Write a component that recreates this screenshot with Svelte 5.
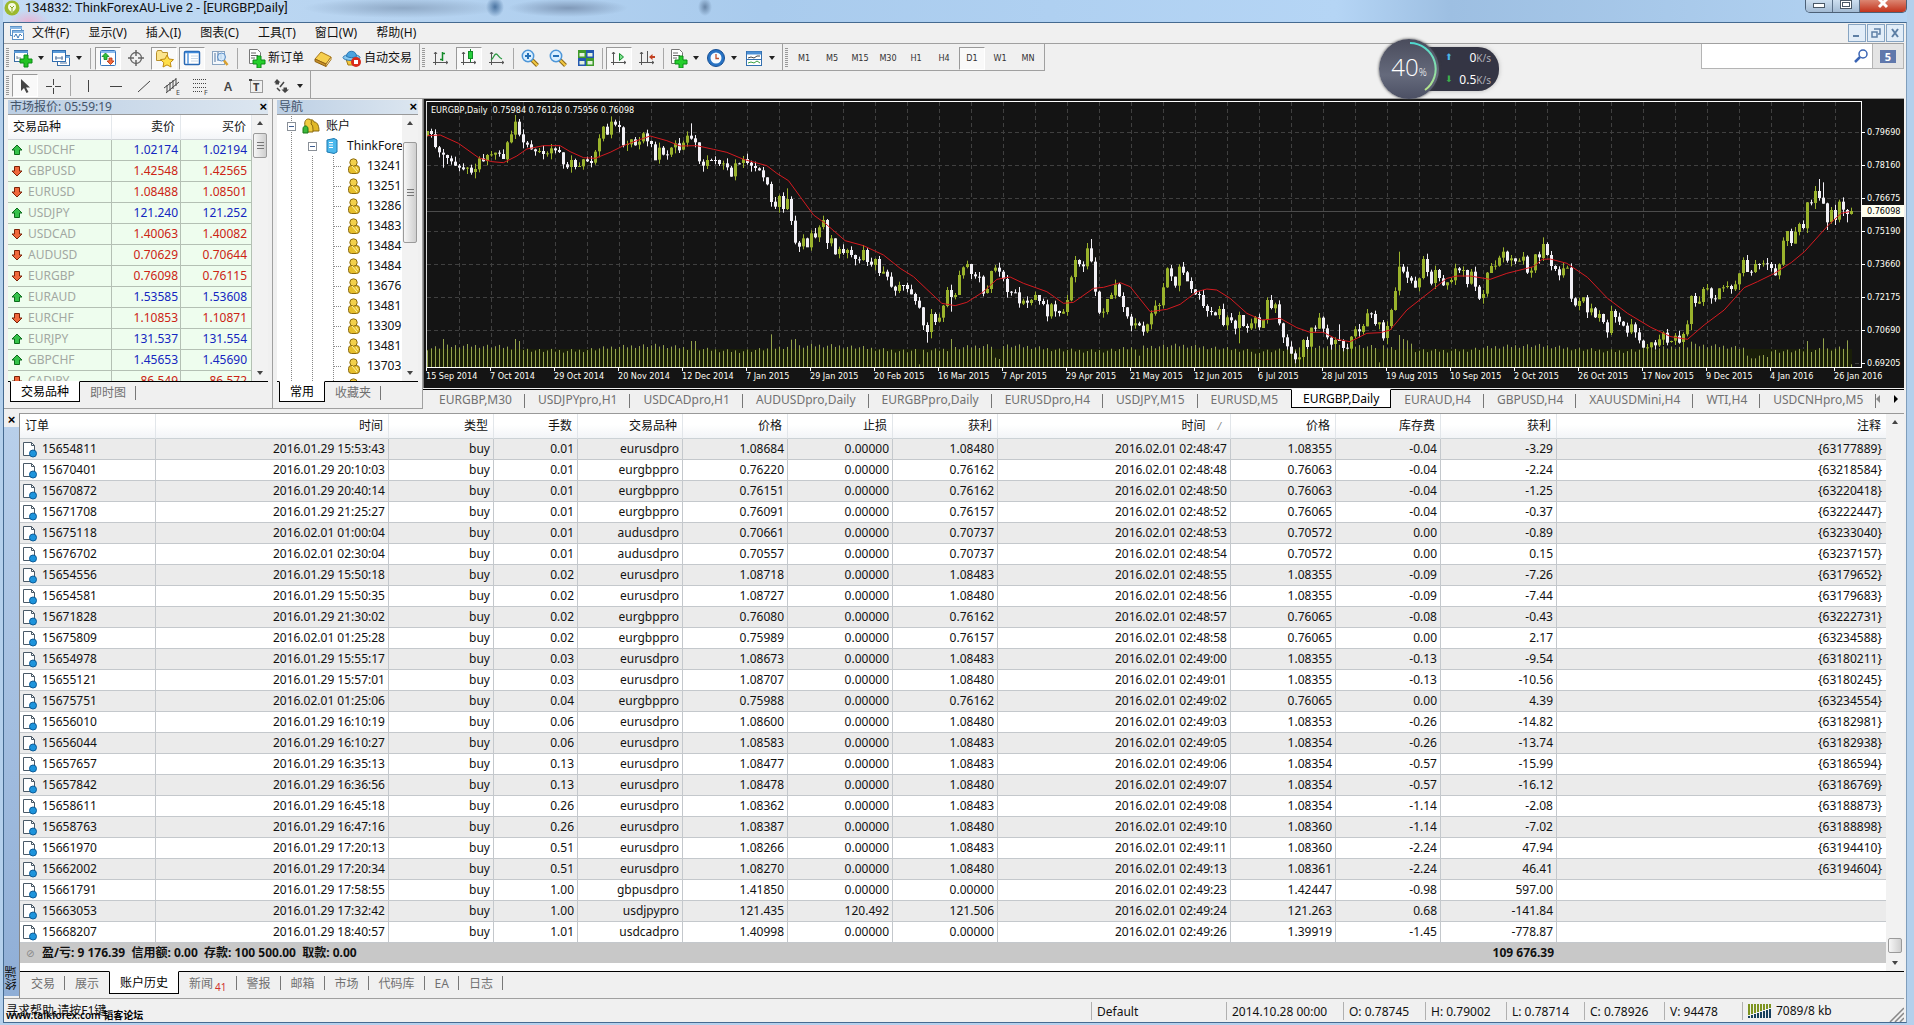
<script lang="ts">
	interface Tool {
		icon?: string;
		label?: string;
		pressed?: boolean;
		caret?: boolean;
		sep?: boolean;
	}

	const menus = ['文件(F)', '显示(V)', '插入(I)', '图表(C)', '工具(T)', '窗口(W)', '帮助(H)'];

	const standardTools: Tool[] = [
		{ icon: 'newchart', caret: true },
		{ icon: 'profiles', caret: true },
		{ sep: true },
		{ icon: 'market', pressed: true },
		{ icon: 'target' },
		{ icon: 'favorites', pressed: true },
		{ icon: 'terminal', pressed: true },
		{ icon: 'tester' },
		{ sep: true },
		{ icon: 'neworder', label: '新订单' },
		{ icon: 'editor' },
		{ icon: 'expert', label: '自动交易' }
	];
	const chartTools: Tool[] = [
		{ icon: 'bars' },
		{ icon: 'candles', pressed: true },
		{ icon: 'linechart' },
		{ sep: true },
		{ icon: 'zoomin' },
		{ icon: 'zoomout' },
		{ icon: 'tile' },
		{ sep: true },
		{ icon: 'autoscroll', pressed: true },
		{ icon: 'shift' },
		{ sep: true },
		{ icon: 'indicators', caret: true },
		{ icon: 'clock', caret: true },
		{ icon: 'template', caret: true }
	];
	const lineTools: Tool[] = [
		{ icon: 'cursor', pressed: true },
		{ icon: 'cross' },
		{ sep: true },
		{ icon: 'vline' },
		{ icon: 'hline' },
		{ icon: 'trend' },
		{ icon: 'channel' },
		{ icon: 'fibo' },
		{ icon: 'text' },
		{ icon: 'label' },
		{ icon: 'arrows', caret: true }
	];
	const periods = ['M1', 'M5', 'M15', 'M30', 'H1', 'H4', 'D1', 'W1', 'MN'];

	const quotes = [
		['USDCHF', '1.02174', '1.02194', 'up'],
		['GBPUSD', '1.42548', '1.42565', 'down'],
		['EURUSD', '1.08488', '1.08501', 'down'],
		['USDJPY', '121.240', '121.252', 'up'],
		['USDCAD', '1.40063', '1.40082', 'down'],
		['AUDUSD', '0.70629', '0.70644', 'down'],
		['EURGBP', '0.76098', '0.76115', 'down'],
		['EURAUD', '1.53585', '1.53608', 'up'],
		['EURCHF', '1.10853', '1.10871', 'down'],
		['EURJPY', '131.537', '131.554', 'up'],
		['GBPCHF', '1.45653', '1.45690', 'up'],
		['CADJPY', '86.549', '86.572', 'down']
	];
	const accounts = ['13241', '13251', '13286', '13483', '13484', '13484', '13676', '13481', '13309', '13481', '13703', '13481'];

	const chartTabs = [
		'EURGBP,M30', 'USDJPYpro,H1', 'USDCADpro,H1', 'AUDUSDpro,Daily', 'EURGBPpro,Daily', 'EURUSDpro,H4',
		'USDJPY,M15', 'EURUSD,M5', 'EURGBP,Daily', 'EURAUD,H4', 'GBPUSD,H4', 'XAUUSDMini,H4', 'WTI,H4', 'USDCNHpro,M5'
	];
	const dates = [
		'15 Sep 2014', '7 Oct 2014', '29 Oct 2014', '20 Nov 2014', '12 Dec 2014', '7 Jan 2015', '29 Jan 2015',
		'20 Feb 2015', '16 Mar 2015', '7 Apr 2015', '29 Apr 2015', '21 May 2015', '12 Jun 2015', '6 Jul 2015',
		'28 Jul 2015', '19 Aug 2015', '10 Sep 2015', '2 Oct 2015', '26 Oct 2015', '17 Nov 2015', '9 Dec 2015',
		'4 Jan 2016', '26 Jan 2016'
	];
	const prices = ['0.79690', '0.78160', '0.76675', '0.75190', '0.73660', '0.72175', '0.70690', '0.69205'];

	// Closing levels, three units to the pixel, measured downwards.
	const closes = [
		108, 117, 157, 173, 180, 190, 200, 212, 217, 222, 218, 232, 222, 190, 198, 180, 178, 173, 177, 192,
		142, 118, 80, 118, 143, 148, 163, 170, 168, 178, 175, 160, 165, 172, 208, 217, 195, 215, 213, 193,
		198, 203, 170, 130, 95, 118, 80, 90, 97, 150, 147, 133, 150, 140, 115, 138, 148, 195, 158, 178,
		180, 158, 145, 165, 143, 122, 130, 142, 200, 212, 195, 195, 195, 208, 205, 218, 245, 205, 205, 192,
		203, 213, 220, 226, 247, 267, 320, 335, 303, 343, 312, 377, 443, 455, 430, 456, 415, 427, 397, 375,
		445, 430, 478, 462, 475, 465, 480, 493, 495, 465, 500, 510, 492, 535, 530, 545, 575, 588, 570, 570,
		583, 597, 617, 637, 690, 712, 657, 680, 668, 632, 585, 605, 600, 540, 517, 507, 538, 545, 545, 595,
		582, 528, 518, 530, 552, 590, 592, 592, 625, 617, 623, 615, 600, 618, 628, 665, 628, 648, 655, 650,
		615, 547, 495, 508, 513, 460, 500, 590, 652, 650, 612, 600, 568, 603, 637, 665, 692, 685, 692, 710,
		688, 655, 632, 630, 577, 520, 545, 573, 515, 532, 558, 583, 597, 600, 633, 648, 652, 660, 642, 690,
		667, 677, 700, 660, 693, 700, 685, 667, 698, 675, 615, 640, 628, 685, 727, 755, 775, 793, 787, 735,
		755, 698, 700, 668, 700, 728, 748, 735, 738, 758, 760, 725, 703, 710, 693, 655, 657, 688, 682, 730,
		693, 645, 588, 515, 530, 548, 557, 578, 550, 492, 530, 565, 525, 550, 572, 562, 555, 520, 527, 525,
		567, 530, 575, 610, 597, 533, 513, 512, 488, 470, 497, 490, 498, 497, 485, 533, 527, 478, 488, 447,
		480, 513, 523, 540, 520, 518, 610, 632, 618, 607, 652, 640, 668, 657, 682, 713, 648, 665, 680, 692,
		712, 688, 712, 737, 758, 757, 742, 750, 733, 713, 742, 738, 722, 742, 717, 688, 603, 625, 620, 582,
		580, 610, 612, 580, 577, 573, 582, 568, 535, 495, 530, 530, 507, 508, 505, 507, 520, 540, 508, 437,
		408, 445, 410, 387, 400, 322, 325, 288, 308, 325, 382, 345, 375, 320, 345, 357, 348
	];
	const highs: Record<number, number> = { 22: 60, 23: 72, 66: 85, 90: 280, 166: 432, 228: 688, 243: 470, 279: 427, 348: 252, 349: 262 };
	const lows: Record<number, number> = { 4: 218, 125: 743, 131: 650, 203: 745, 350: 405, 355: 382 };
	const volumes: Record<number, number> = {
		4: 84, 22: 84, 23: 78, 66: 78, 67: 78, 86: 98, 91: 82, 92: 84, 123: 8, 131: 84, 142: 28, 143: 24, 178: 34,
		207: 40, 238: 14, 243: 96, 244: 84, 245: 80, 246: 70, 316: 76, 330: 34, 331: 26, 332: 26, 333: 34, 334: 36,
		335: 30, 345: 78, 349: 86, 355: 80, 356: 8
	};

	const candles = closes.map((close, i) => {
		const open = i ? closes[i - 1] : 124;
		const top = Math.min(open, close);
		const bottom = Math.max(open, close);
		return {
			x: i * 4,
			up: close < open,
			top: top / 3 - 7,
			height: Math.max(1, Math.round((bottom - top) / 3)),
			high: (highs[i] ?? top - ((i * 7) % 17)) / 3 - 7,
			low: (lows[i] ?? bottom + ((i * 11) % 19)) / 3 - 7,
			volume: (volumes[i] ?? 50 + ((i * 5) % 13) + 8 * Math.sin(i / 7)) / 3
		};
	});

	const average = [
		22, 122, 60, 120, 115, 145, 175, 188, 215, 200, 250, 203, 290, 183, 320, 162, 370, 152, 420, 152, 450, 170,
		490, 188, 525, 190, 570, 172, 610, 152, 650, 137, 690, 123, 740, 137, 780, 153, 830, 152, 880, 163, 920, 172,
		970, 193, 1040, 212, 1070, 235, 1105, 257, 1140, 305, 1180, 360, 1215, 385, 1275, 437, 1330, 452, 1390, 480,
		1440, 520, 1480, 545, 1520, 583, 1565, 625, 1605, 632, 1640, 622, 1690, 590, 1730, 553, 1770, 546, 1810, 565,
		1880, 590, 1930, 625, 1960, 622, 2020, 580, 2050, 577, 2100, 563, 2130, 575, 2190, 650, 2240, 643, 2280, 628,
		2330, 590, 2360, 582, 2390, 585, 2430, 610, 2480, 655, 2525, 675, 2580, 670, 2630, 698, 2670, 712, 2710, 712,
		2750, 733, 2790, 740, 2840, 715, 2880, 713, 2910, 705, 2960, 645, 3030, 590, 3080, 550, 3110, 543, 3150, 543,
		3210, 553, 3260, 535, 3340, 515, 3366, 493, 3390, 492, 3440, 505, 3502, 547, 3562, 610, 3622, 655, 3692, 697,
		3752, 725, 3802, 733, 3852, 690, 3912, 645, 3972, 578, 4012, 560, 4063, 535, 4113, 503, 4153, 470, 4223, 392,
		4263, 355, 4288, 350
	];
	let averagePoints = '';
	for (let i = 0; i < average.length; i += 2) {
		averagePoints += `${(average[i] - 22) / 3 + 0.5},${average[i + 1] / 3 - 7} `;
	}

	const historyColumns = [
		['订单', 136], ['时间', 233], ['类型', 105], ['手数', 84], ['交易品种', 105], ['价格', 105], ['止损', 105],
		['获利', 105], ['时间', 233], ['价格', 105], ['库存费', 105], ['获利', 116], ['注释', 0]
	] as [string, number][];

	// order, open time, lots, symbol, price, S/L, T/P, close time, price, swap, profit, comment
	const history = `
15654811|01.29 15:53:43|0.01|eurusdpro|1.08684|0.00000|1.08480|48:47|1.08355|-0.04|-3.29|{63177889}
15670401|01.29 20:10:03|0.01|eurgbppro|0.76220|0.00000|0.76162|48:48|0.76063|-0.04|-2.24|{63218584}
15670872|01.29 20:40:14|0.01|eurgbppro|0.76151|0.00000|0.76162|48:50|0.76063|-0.04|-1.25|{63220418}
15671708|01.29 21:25:27|0.01|eurgbppro|0.76091|0.00000|0.76157|48:52|0.76065|-0.04|-0.37|{63222447}
15675118|02.01 01:00:04|0.01|audusdpro|0.70661|0.00000|0.70737|48:53|0.70572|0.00|-0.89|{63233040}
15676702|02.01 02:30:04|0.01|audusdpro|0.70557|0.00000|0.70737|48:54|0.70572|0.00|0.15|{63237157}
15654556|01.29 15:50:18|0.02|eurusdpro|1.08718|0.00000|1.08483|48:55|1.08355|-0.09|-7.26|{63179652}
15654581|01.29 15:50:35|0.02|eurusdpro|1.08727|0.00000|1.08480|48:56|1.08355|-0.09|-7.44|{63179683}
15671828|01.29 21:30:02|0.02|eurgbppro|0.76080|0.00000|0.76162|48:57|0.76065|-0.08|-0.43|{63222731}
15675809|02.01 01:25:28|0.02|eurgbppro|0.75989|0.00000|0.76157|48:58|0.76065|0.00|2.17|{63234588}
15654978|01.29 15:55:17|0.03|eurusdpro|1.08673|0.00000|1.08483|49:00|1.08355|-0.13|-9.54|{63180211}
15655121|01.29 15:57:01|0.03|eurusdpro|1.08707|0.00000|1.08480|49:01|1.08355|-0.13|-10.56|{63180245}
15675751|02.01 01:25:06|0.04|eurgbppro|0.75988|0.00000|0.76162|49:02|0.76065|0.00|4.39|{63234554}
15656010|01.29 16:10:19|0.06|eurusdpro|1.08600|0.00000|1.08480|49:03|1.08353|-0.26|-14.82|{63182981}
15656044|01.29 16:10:27|0.06|eurusdpro|1.08583|0.00000|1.08483|49:05|1.08354|-0.26|-13.74|{63182938}
15657657|01.29 16:35:13|0.13|eurusdpro|1.08477|0.00000|1.08483|49:06|1.08354|-0.57|-15.99|{63186594}
15657842|01.29 16:36:56|0.13|eurusdpro|1.08478|0.00000|1.08480|49:07|1.08354|-0.57|-16.12|{63186769}
15658611|01.29 16:45:18|0.26|eurusdpro|1.08362|0.00000|1.08483|49:08|1.08354|-1.14|-2.08|{63188873}
15658763|01.29 16:47:16|0.26|eurusdpro|1.08387|0.00000|1.08480|49:10|1.08360|-1.14|-7.02|{63188898}
15661970|01.29 17:20:13|0.51|eurusdpro|1.08266|0.00000|1.08483|49:11|1.08360|-2.24|47.94|{63194410}
15662002|01.29 17:20:34|0.51|eurusdpro|1.08270|0.00000|1.08480|49:13|1.08361|-2.24|46.41|{63194604}
15661791|01.29 17:58:55|1.00|gbpusdpro|1.41850|0.00000|0.00000|49:23|1.42447|-0.98|597.00|
15663053|01.29 17:32:42|1.00|usdjpypro|121.435|120.492|121.506|49:24|121.263|0.68|-141.84|
15668207|01.29 18:40:57|1.01|usdcadpro|1.40998|0.00000|0.00000|49:26|1.39919|-1.45|-778.87|`
		.trim()
		.split('\n')
		.map((line) => {
			const f = line.split('|');
			return [f[0], `2016.${f[1]}`, 'buy', ...f.slice(2, 7), `2016.02.01 02:${f[7]}`, ...f.slice(8)];
		});

	const terminalTabs = ['交易', '展示', '账户历史', '新闻', '警报', '邮箱', '市场', '代码库', 'EA', '日志'];
	const statusCells = [
		['Default', 135], ['2014.10.28 00:00', 117], ['O: 0.78745', 82], ['H: 0.79002', 81], ['L: 0.78714', 78],
		['C: 0.78926', 80], ['V: 94478', 78]
	] as [string, number][];
</script>

{#snippet icon(name: string)}
	<svg class="icon" width="20" height="20" viewBox="0 0 20 20" fill="none" aria-hidden="true">
		{#if name === 'newchart'}
			<rect x="1.500" y="2.500" width="13" height="11" fill="#fff" stroke="#3a6ea5" />
			<path d="M1 4h14" stroke="#5a9ad8" stroke-width="2" />
			<path d="M4 10h4M4 8v3M12 8h2" stroke="#789" />
			<path d="M11 7h4v4h4v4h-4v4h-4v-4H7v-4h4z" fill="#22c322" stroke="#0b8a16" />
		{:else if name === 'profiles'}
			<rect x="6.500" y="7.500" width="12" height="10" fill="#fff" stroke="#3a6ea5" />
			<path d="M6 9h13" stroke="#78aee0" stroke-width="2" />
			<rect x="1.500" y="2.500" width="13" height="11" fill="#fff" stroke="#2f6db0" />
			<path d="M2 4h12" stroke="#5a9ad8" stroke-width="2" />
			<path d="M4 10h8M5 8v4M11 8v4M9 15h7" stroke="#5577a0" />
		{:else if name === 'market'}
			<rect x="2.500" y="2.500" width="15" height="15" rx="1" fill="#fff" stroke="#3676bd" />
			<path d="M3 4h14" stroke="#8abcf0" stroke-width="2" />
			<path d="M7.500 5l3.500 3.500H9v3H6v-3H4z" fill="#2fc43a" stroke="#138022" stroke-width=".8" />
			<path d="M12.500 16.500L9 13h2v-3h3v3h2z" fill="#f46a3c" stroke="#b02e0c" stroke-width=".8" />
		{:else if name === 'target'}
			<circle cx="10" cy="10" r="5.500" stroke="#666" stroke-width="1.300" />
			<path d="M10 2v6M10 12v6M2 10h6M12 10h6" stroke="#666" stroke-width="1.500" />
		{:else if name === 'favorites'}
			<path d="M2.500 4.500l1-2h4l1 2h5v8h-11z" fill="#fbe48c" stroke="#b8902c" />
			<path d="M13 7l2 4 4.500.6-3.200 3.100.8 4.300-4.100-2.100L9 19l.8-4.300-3.300-3.100L11 11z" fill="#ffdf4a" stroke="#c08a10" />
		{:else if name === 'terminal'}
			<rect x="2.500" y="3.500" width="15" height="13" rx="1" fill="#fff" stroke="#2868b4" stroke-width="1.500" />
			<path d="M3 4.500h14" stroke="#3f8ada" stroke-width="1.500" />
			<path d="M6 5v11" stroke="#7fb0e6" stroke-width="2" />
			<path d="M9 8h7M9 10.500h7M9 13h7" stroke="#c8d8e8" />
		{:else if name === 'tester'}
			<rect x="2.500" y="3.500" width="12" height="13" fill="#f4f8fc" stroke="#8aa4c0" />
			<path d="M5 5v9M8 4v9M11 5v6" stroke="#5577a0" />
			<circle cx="11.500" cy="9" r="4" fill="#cfe6fa" fill-opacity=".8" stroke="#5b8fc8" />
			<path d="M14 12.500l3.500 4.500" stroke="#d8a030" stroke-width="2.500" />
		{:else if name === 'neworder' || name === 'indicators'}
			<path d="M3.500 1.500h8l3 3v11h-11z" fill="#fff" stroke="#777" />
			<path d="M5 5h5M5 7.500h7M5 10h4" stroke="#666" />
			<path d="M11 8h4v4h4v4h-4v4h-4v-4H7v-4h4z" fill="#25cf2c" stroke="#0b8a16" />
		{:else if name === 'editor'}
			<path d="M2 11l6-7 10 5-5 7z" fill="#f6cf4e" stroke="#a9781a" />
			<path d="M2 11v2.500l11 5V16z" fill="#c8922a" stroke="#8f6112" />
			<path d="M13 18.500l5-7V9l-5 7z" fill="#fff2c0" stroke="#a9781a" />
		{:else if name === 'expert'}
			<path d="M4 11h12l-2 6H6z" fill="#f3c63b" stroke="#a37a18" />
			<ellipse cx="9.500" cy="9.500" rx="8.500" ry="3" fill="#86c8f0" stroke="#2c78b4" />
			<path d="M4.500 8.500c0-7 10-7 10 0-3 1.500-7 1.500-10 0z" fill="#4aa3df" stroke="#2c78b4" />
			<circle cx="14" cy="14" r="5" fill="#d92b1c" />
			<rect x="12" y="12" width="4" height="4" fill="#fff" />
		{:else if name === 'bars'}
			<path d="M4.500 4v13M2 14.500h15M3 6l1.500-2L6 6M15 13l2 1.500-2 1.500" stroke="#555" />
			<path d="M11.500 4v9M11.500 5.500h2.500M9 11.500h2.500" stroke="#128a28" stroke-width="1.500" />
		{:else if name === 'candles'}
			<path d="M4.500 4v13M2 14.500h15M3 6l1.500-2L6 6M15 13l2 1.500-2 1.500" stroke="#555" />
			<path d="M11.500 1v13" stroke="#128a28" />
			<rect x="9.500" y="3.500" width="4" height="7" fill="#25cf3c" stroke="#128a28" />
		{:else if name === 'linechart'}
			<path d="M4.500 4v13M2 14.500h15M3 6l1.500-2L6 6M15 13l2 1.500-2 1.500" stroke="#555" />
			<path d="M4 12c3-2 3-6 5-6s2 3 6 5" stroke="#2e9a44" stroke-width="1.300" />
		{:else if name === 'zoomin' || name === 'zoomout'}
			<path d="M12 12l5.500 5.500" stroke="#8c6a1c" stroke-width="4" />
			<path d="M12 12l5.500 5.500" stroke="#f4c942" stroke-width="2" />
			<circle cx="8" cy="8" r="5.700" fill="#d9efff" stroke="#4d96d8" stroke-width="1.500" />
			<path d="M5 8h6" stroke="#2470b8" stroke-width="2" />
			{#if name === 'zoomin'}<path d="M8 5v6" stroke="#2470b8" stroke-width="2" />{/if}
		{:else if name === 'tile'}
			<path d="M2 2h8v8H2zM10 10h8v8h-8z" fill="#3f9a2c" />
			<path d="M10 2h8v8h-8zM2 10h8v8H2z" fill="#2358b0" />
			<path d="M3.500 5h5v3.500h-5zM11.500 5h5v3.500h-5zM3.500 13h5v3.500h-5zM11.500 13h5v3.500h-5z" fill="#e4f2e0" />
		{:else if name === 'autoscroll'}
			<path d="M4.500 4v13M2 14.500h15M3 6l1.500-2L6 6M15 13l2 1.500-2 1.500" stroke="#555" />
			<path d="M10.500 5.500l4 3.500-4 3.500z" fill="#7be08c" stroke="#128a28" />
		{:else if name === 'shift'}
			<path d="M4.500 4v13M2 14.500h15M3 6l1.500-2L6 6M15 13l2 1.500-2 1.500M10.500 3v11" stroke="#555" />
			<path d="M12 9l3.500-3v2H18v2h-2.500v2z" fill="#c24020" />
		{:else if name === 'clock'}
			<circle cx="10" cy="10" r="7" fill="#f6fbff" stroke="#2773c4" stroke-width="3" />
			<circle cx="10" cy="10" r="8.500" stroke="#174f94" />
			<path d="M10 6v4.500h3" stroke="#c0502c" stroke-width="1.300" />
		{:else if name === 'template'}
			<rect x="2.500" y="3.500" width="15" height="14" fill="#fff" stroke="#3470b0" />
			<path d="M3 5h14" stroke="#4d90d4" stroke-width="3" />
			<path d="M4 10l3-1 3 1 3-2 3 0" stroke="#444" />
			<path d="M3 11.500h14" stroke="#3470b0" />
			<path d="M4 15l3-1 3 1 3-2 3 2" stroke="#3aa040" />
		{:else if name === 'cursor'}
			<path d="M6 3v12l3-3 2.500 5 2-1-2.500-4.500h4z" fill="#444" />
		{:else if name === 'cross'}
			<path d="M10.500 3v6M10.500 12v6M3 10.500h6M12 10.500h6" stroke="#444" />
		{:else if name === 'vline'}
			<path d="M10.500 4v12" stroke="#444" />
		{:else if name === 'hline'}
			<path d="M4 10.500h12" stroke="#444" />
		{:else if name === 'trend'}
			<path d="M4 16L16 5" stroke="#444" />
		{:else if name === 'channel'}
			<path d="M2 12L14 3M4 17L17 6M5 9v7M8 6v9M11 4v9M14 2v8" stroke="#444" />
			<text x="14" y="19" font-size="7" fill="#444">E</text>
		{:else if name === 'fibo'}
			<path d="M3 3.500h13M3 7.500h13M3 11.500h13M3 15.500h9" stroke="#444" stroke-dasharray="1 1" />
			<text x="14" y="19" font-size="7" fill="#444">F</text>
		{:else if name === 'text'}
			<text x="6" y="15" font-size="12" font-weight="600" fill="#444">A</text>
		{:else if name === 'label'}
			<rect x="4.500" y="4.500" width="12" height="12" stroke="#444" stroke-dasharray="1 1" />
			<path d="M3 3h3v2H3z" fill="#444" />
			<text x="7" y="15" font-size="11" font-weight="bold" fill="#444">T</text>
		{:else if name === 'arrows'}
			<path d="M5 3l3.500 3.500H7v2H3.500V6.500H2zM13 17l-3.500-3.500h2v-2h3.500v2H17z" fill="#444" />
			<path d="M5 12l3 3M12 6l-4 5" stroke="#444" stroke-width="1.500" />
		{/if}
	</svg>
{/snippet}

{#snippet tools(items: Tool[])}
	{#each items as t}
		{#if t.sep}
			<span class="sep"></span>
		{:else}
			<button
				class="tool"
				class:pressed={t.pressed}
				class:wide={t.caret}
				class:labelled={t.label}
				aria-label={t.label ?? t.icon}
			>
				{@render icon(t.icon ?? '')}
				{#if t.label}<span>{t.label}</span>{/if}
				{#if t.caret}<i class="caret"></i>{/if}
			</button>
		{/if}
	{/each}
{/snippet}

{#snippet person()}
	<svg width="14" height="16" viewBox="0 0 14 16" aria-hidden="true">
		<rect x="1.500" y="7.500" width="11" height="8" rx="3" fill="#e6bf2c" stroke="#8a6a10" />
		<circle cx="6.500" cy="4.500" r="3.700" fill="#f2d04a" stroke="#8a6a10" />
		<path d="M5 8l5 6M9 9l2 3" stroke="#fff3a8" fill="none" />
	</svg>
{/snippet}

<div class="window">
	<header class="titlebar">
		<svg width="16" height="16" viewBox="0 0 16 16" aria-hidden="true">
			<circle cx="8" cy="8" r="7.500" fill="#9cb92e" />
			<path d="M8 13c-1-2-4-3-4-6a4 4 0 0 1 8 0c0 3-3 4-4 6z" fill="#f6fadf" />
			<path d="M8 12V8M6 6l2 2 2-2" stroke="#8aa822" fill="none" />
		</svg>
		<h1>134832: ThinkForexAU-Live 2 - [EURGBP,Daily]</h1>
		<div class="caption">
			<button aria-label="Minimize"><i class="min"></i></button>
			<button aria-label="Maximize"><i class="max"></i></button>
			<button class="close" aria-label="Close">
				<svg width="14" height="10" viewBox="0 0 14 10"><path d="M3 -1l8 8M11 -1l-8 8" stroke="#fff" stroke-width="3" /></svg>
			</button>
		</div>
	</header>

	<div class="client">
		<nav class="menubar">
			<svg width="16" height="16" viewBox="0 0 16 16" fill="none" aria-hidden="true">
				<rect x="1.500" y="1.500" width="11" height="9" fill="#fff" stroke="#5d93c8" />
				<rect x="3.500" y="5.500" width="11" height="9" fill="#fff" stroke="#5d93c8" />
				<path d="M1 3h12M4 7h11" stroke="#8ab8e4" stroke-width="2" />
				<path d="M5 12l2-3 2 4 2-4 2 2" stroke="#3c78b4" />
			</svg>
			{#each menus as m}<button>{m}</button>{/each}
			<div class="mdi">
				<button aria-label="Minimize chart"><svg width="12" height="12"><path d="M2 9h6" stroke="#5d7fa5" stroke-width="2" /></svg></button>
				<button aria-label="Restore chart"><svg width="12" height="12"><path d="M4 2h6v5H8M2 5h5v5H2z" fill="none" stroke="#5d7fa5" stroke-width="1.500" /></svg></button>
				<button aria-label="Close chart"><svg width="12" height="12"><path d="M3 2l6 8M9 2l-6 8" stroke="#5d7fa5" stroke-width="2" /></svg></button>
			</div>
		</nav>

		<div class="toolrow">
			<div class="toolbar"><span class="grip"></span>{@render tools(standardTools)}</div>
			<div class="toolbar tight"><span class="grip"></span>{@render tools(chartTools)}</div>
			<div class="toolbar">
				<span class="grip"></span>
				{#each periods as p}<button class="tool period" class:pressed={p === 'D1'}>{p}</button>{/each}
			</div>
			<div class="search">
				<input type="text" aria-label="Search" />
				<svg width="16" height="16" viewBox="0 0 16 16" fill="none" aria-hidden="true">
					<circle cx="10" cy="6" r="4" stroke="#3a64b4" stroke-width="1.500" />
					<path d="M7 9l-5 5" stroke="#3a64b4" stroke-width="2.500" />
				</svg>
				<button class="community" aria-label="Messages"><b>5</b></button>
			</div>
		</div>
		<div class="toolrow second">
			<div class="toolbar"><span class="grip"></span>{@render tools(lineTools)}</div>
		</div>

		<div class="workspace">
			<section class="panel market">
				<div class="panel-title"><span>市场报价: 05:59:19</span><button aria-label="Close">×</button></div>
				<div class="panel-body">
					<div class="clip">
						<table class="quotes">
							<colgroup><col class="symbol" /><col class="bid-col" /><col /></colgroup>
							<thead><tr><th>交易品种</th><th>卖价</th><th>买价</th></tr></thead>
							<tbody>
								{#each quotes as [symbol, bid, ask, dir]}
									<tr class={dir}>
										<td>
											<svg width="12" height="12" viewBox="0 0 12 12" aria-hidden="true">
												{#if dir === 'up'}
													<path d="M6 1l5 5H8.500v4.500h-5V6H1z" fill="#35c24a" stroke="#0b6b1a" />
												{:else}
													<path d="M6 11l5-5H8.500V1.500h-5V6H1z" fill="#f0683c" stroke="#7c2208" />
												{/if}
											</svg>{symbol}
										</td>
										<td>{bid}</td>
										<td>{ask}</td>
									</tr>
								{/each}
							</tbody>
						</table>
					</div>
					<div class="scrollbar"><i class="up"></i><b class="thumb"></b><i class="dn"></i></div>
				</div>
				<div class="tabs"><button class="active">交易品种</button><button>即时图</button></div>
			</section>

			<section class="panel navigator">
				<div class="panel-title"><span>导航</span><button aria-label="Close">×</button></div>
				<div class="panel-body">
					<ul class="clip tree">
						<li class="root"><i class="node"></i>
							<svg width="18" height="16" viewBox="0 0 18 16" aria-hidden="true">
								<path d="M5 13c-1-6 0-7 2-8-1-3 4-5 5-1 4 0 5 5 5 9z" fill="#e0b828" stroke="#8a6a10" />
								<path d="M3 12V8c-1-5 1-7 3.500-7S10 3 9 6c2 1 2 4 2 8H5z" fill="#f0cc40" stroke="#8a6a10" />
								<path d="M1 15v-4c0-2 1-3 2.500-3S6 9 6 11v4z" fill="#3cb83c" stroke="#187818" />
							</svg>
							账户
						</li>
						<li class="server"><i class="node"></i>
							<svg width="12" height="16" viewBox="0 0 12 16" aria-hidden="true">
								<path d="M1 2l7-1.500 3 1.500v12l-3 1.500L1 14z" fill="#4cb8ec" stroke="#1a78b0" />
								<path d="M3 4.500h4M3 7h4M3 9.500h4" stroke="#fff" />
							</svg>
							<span>ThinkForexAU-Live 2</span>
						</li>
						{#each accounts as a}
							<li class="account"><i class="dots"></i>{@render person()}{a}</li>
						{/each}
					</ul>
					<div class="scrollbar"><i class="up"></i><b class="thumb tall"></b><i class="dn"></i></div>
				</div>
				<div class="tabs"><button class="active">常用</button><button>收藏夹</button></div>
			</section>

			<section class="chart-pane">
				<div class="chart">
					<div class="plot">
						<svg width="100%" height="100%">
							{#each Array(60) as _, i}
								<path class="grid" d="M{(i + 1) * 32 + 0.5} 0v265" />
							{/each}
							{#each prices as _, i}
								<line class="grid" x1="0" x2="100%" y1={30.5 + i * 33} y2={30.5 + i * 33} />
							{/each}
							<line class="bid" x1="0" x2="100%" y1="109.500" y2="109.500" />
							<rect y="247" width="1425" height="18" fill="#191e08" />
							{#each candles as c}
								<rect x={c.x} y={265 - c.volume} width="1" height={c.volume} fill="#94a34c" />
							{/each}
							{#each candles as c}
								<g fill={c.up ? '#9ab32c' : '#f2f0f6'}>
									<rect x={c.x} y={c.high} width="1" height={c.low - c.high} />
									<rect x={c.x - 1} y={c.top} width="3" height={c.height} />
								</g>
							{/each}
							<polyline points={averagePoints} fill="none" stroke="#d41a20" />
						</svg>
						<span class="ohlc">EURGBP,Daily&nbsp; 0.75984 0.76128 0.75956 0.76098</span>
					</div>
					<div class="price-axis">
						{#each prices as p}<span>{p}</span>{/each}
						<b>0.76098</b>
					</div>
					<div class="date-axis">{#each dates as d}<span>{d}</span>{/each}</div>
				</div>
				<div class="tabs chart-tabs">
					{#each chartTabs as t}<button class:active={t === 'EURGBP,Daily'}>{t}</button>{/each}
					<span class="tab-scroll"><i></i><i></i></span>
				</div>
			</section>
		</div>

		<section class="terminal">
			<div class="side"><button aria-label="Close">×</button><span>终端</span></div>
			<div class="terminal-main">
				<div class="history-wrap">
					<table class="history">
						<colgroup>
							{#each historyColumns as [, w]}<col style={w ? `width: ${w}px` : ''} />{/each}
						</colgroup>
						<thead>
							<tr>
								{#each historyColumns as [name], i}
									<th>{name}{#if i === 8}<em>/</em>{/if}</th>
								{/each}
							</tr>
						</thead>
						<tbody>
							{#each history as row}
								<tr>
									{#each row as cell, i}
										<td>
											{#if i === 0}
												<svg width="16" height="17" viewBox="0 0 16 17" aria-hidden="true">
													<path d="M1.500 1.500h8l3 3v10h-11z" fill="#fff" stroke="#4a5a68" />
													<path d="M9.500 1.500v3h3" fill="none" stroke="#4a5a68" />
													<circle cx="11" cy="12.500" r="3.500" fill="#1d94dc" stroke="#0c5c98" />
												</svg>
											{/if}{cell}
										</td>
									{/each}
								</tr>
							{/each}
						</tbody>
						<tfoot>
							<tr>
								<td colspan="11"><i>⊘</i>盈/亏: 9 176.39&nbsp; 信用额: 0.00&nbsp; 存款: 100 500.00&nbsp; 取款: 0.00</td>
								<td>109 676.39</td>
								<td></td>
							</tr>
						</tfoot>
					</table>
					<div class="scrollbar"><i class="up"></i><b class="thumb end"></b><i class="dn"></i></div>
				</div>
				<div class="tabs terminal-tabs">
					{#each terminalTabs as t}
						<button class:active={t === '账户历史'}>{t}{#if t === '新闻'}<sub>41</sub>{/if}</button>
					{/each}
				</div>
			</div>
		</section>

		<footer class="statusbar">
			<span class="help">寻求帮助,请按F1键<small>www.talkforex.com 韬客论坛</small></span>
			{#each statusCells as [text, w]}<span class="cell" style="width: {w}px">{text}</span>{/each}
			<span class="cell traffic">
				<svg width="24" height="14" viewBox="0 0 24 14" aria-hidden="true">
					{#each Array(8) as _, i}
						<rect x={i * 3} y="0" width="2" height={11 - i} fill="#7d9420" />
						<rect x={i * 3} y={12 - i} width="2" height={2 + i} fill="#17405c" />
					{/each}
				</svg>
				7089/8 kb
			</span>
			<svg class="resize" width="16" height="16" viewBox="0 0 16 16" aria-hidden="true">
				<path d="M2 16L16 2M7 16l9-9M12 16l4-4" stroke="#888" stroke-width="1.500" />
			</svg>
		</footer>
	</div>

	<aside class="meter">
		<div class="speeds">
			<p><i class="upload">⬆</i><span>0<small>K/s</small></span></p>
			<p><i class="download">⬇</i><span>0.5<small>K/s</small></span></p>
		</div>
		<div class="ball">
			<svg width="60" height="60" viewBox="0 0 60 60" aria-hidden="true">
				<defs>
					<linearGradient id="arc" x2="0" y2="1">
						<stop offset="0" stop-color="#4fd8d0" />
						<stop offset="1" stop-color="#b8e48a" />
					</linearGradient>
				</defs>
				<path d="M31 4A26 26 0 0 1 46 51" fill="none" stroke="url(#arc)" stroke-width="2" />
			</svg>
			<span>40<small>%</small></span>
		</div>
	</aside>
</div>

<style>
	:global(body) {
		margin: 0;
		background: #b4d0ec;
	}
	.window {
		--ui: 'Noto Sans', 'Noto Sans CJK SC', sans-serif;
		--small: 'DejaVu Sans Condensed', 'DejaVu Sans', sans-serif;
		position: relative;
		display: flex;
		flex-direction: column;
		box-sizing: border-box;
		min-height: 100vh;
		padding: 0 7px 2px 3px;
		background: #b4d0ec;
		color: #111;
		font: 12px/16px var(--ui);
		white-space: nowrap;
	}
	button {
		margin: 0;
		padding: 0;
		border: 0;
		background: none;
		color: inherit;
		font: inherit;
	}
	svg {
		flex: none;
		display: block;
	}
	h1,
	p,
	ul {
		margin: 0;
		padding: 0;
	}

	/* Title bar */
	.titlebar {
		display: flex;
		align-items: flex-start;
		gap: 5px;
		height: 22px;
		padding-left: 1px;
		background:
			radial-gradient(ellipse 20px 12px at 26px 22px, #e8b4d4, transparent),
			radial-gradient(ellipse 100px 10px at 400px 8px, #8fa9c6, transparent),
			radial-gradient(ellipse 9px 10px at 492px 7px, #47719f, transparent),
			radial-gradient(ellipse 60px 9px at 565px 8px, #8099b8, transparent),
			radial-gradient(ellipse 7px 9px at 702px 7px, #6885a6, transparent),
			linear-gradient(90deg, #c4dcf4, #a9cbed 40%, #b5d5f5 70%, #9dbfe2 76%, #b4d4f3);
	}
	.titlebar h1 {
		flex: 1;
		font: 13px/16px Roboto, 'Noto Sans', sans-serif;
	}
	.caption {
		display: flex;
		border: 1px solid #4c6077;
		border-top: 0;
		border-radius: 0 0 5px 5px;
		overflow: hidden;
	}
	.caption button {
		display: flex;
		justify-content: center;
		width: 27px;
		height: 12px;
		border-right: 1px solid #5b7088;
		background: linear-gradient(#cddff0, #a3bbd4);
	}
	.caption .close {
		width: 46px;
		border: 0;
		background: linear-gradient(#dc8672, #c2331c);
	}
	.min,
	.max {
		box-sizing: border-box;
		width: 12px;
		height: 5px;
		margin-top: 3px;
		border: 1px solid #4a5866;
		background: #fff;
	}
	.max {
		height: 9px;
		margin-top: 0;
		border: 3px double #4a5866;
	}

	.client {
		flex: 1;
		display: flex;
		flex-direction: column;
		border: 1px solid #456a90;
		border-right-color: #7f9dbb;
		background: #f0f0f0;
		padding-right: 2px;
	}

	/* Menu and toolbars */
	.menubar {
		display: flex;
		align-items: center;
		height: 20px;
		padding-left: 5px;
		border-bottom: 1px solid #a0a0a0;
	}
	.menubar > button {
		margin-left: 7px;
		padding-right: 12px;
	}
	.mdi {
		display: flex;
		gap: 1px;
		margin-left: auto;
	}
	.mdi button {
		display: grid;
		place-items: center;
		width: 18px;
		height: 18px;
		border: 1px solid #86a4c2;
		box-sizing: border-box;
		background: #e2edf8;
	}
	.toolrow {
		display: flex;
		height: 27px;
	}
	.toolbar {
		display: flex;
		align-items: center;
		box-sizing: border-box;
		padding: 2px 2px 0;
		border-right: 1px solid #a0a0a0;
		border-bottom: 1px solid #a0a0a0;
	}
	.second .toolbar {
		border-bottom: 0;
	}
	.grip {
		width: 3px;
		height: 20px;
		margin-right: 2px;
		background: repeating-linear-gradient(#999 0 1px, transparent 1px 2px);
	}
	.sep {
		width: 1px;
		height: 21px;
		margin: 0 3px;
		background: #a8a8a8;
	}
	.tight .sep {
		margin: 0 2px;
	}
	.tool {
		display: flex;
		align-items: center;
		justify-content: center;
		box-sizing: border-box;
		min-width: 26px;
		height: 23px;
		margin: 0 1px;
		border: 1px solid transparent;
	}
	.tool.wide {
		justify-content: flex-start;
		width: 36px;
	}
	.tool.labelled {
		gap: 2px;
		padding: 0 3px;
	}
	.tool.pressed {
		border-color: #999 #fff #fff #999;
		background: #f9f9f9;
	}
	.tool.period {
		color: #333;
		font: 9px/14px var(--small);
	}
	.caret {
		margin-left: 5px;
		border: 3px solid transparent;
		border-top: 4px solid #222;
		border-bottom: 0;
	}
	.search {
		display: flex;
		align-items: center;
		width: 203px;
		height: 25px;
		margin-left: auto;
		box-sizing: border-box;
		border: 1px solid #b4b4b4;
		border-top: 0;
		background: #fff;
	}
	.search input {
		flex: 1;
		min-width: 0;
		border: 0;
		outline: 0;
		font: inherit;
	}
	.community {
		width: 31px;
		height: 24px;
		margin-left: 3px;
		border-left: 1px solid #b4b4b4;
		background: #e4e4e4;
	}
	.community b {
		display: block;
		width: 16px;
		margin: 0 auto;
		background: #6078ac;
		color: #fff;
		font-size: 11px;
		line-height: 13px;
	}

	/* Docked panels */
	.workspace {
		display: flex;
		height: 310px;
		border-top: 1px solid #a0a0a0;
	}
	.panel {
		flex: none;
		display: flex;
		flex-direction: column;
		box-sizing: border-box;
		padding: 1px 4px 5px;
		border-right: 1px solid #a0a0a0;
		border-bottom: 1px solid #a0a0a0;
	}
	.market {
		width: 269px;
	}
	.navigator {
		width: 150px;
	}
	.panel-title {
		display: flex;
		justify-content: space-between;
		height: 15px;
		padding: 0 1px 0 2px;
		border-bottom: 1px solid #999;
		background: linear-gradient(90deg, #bccfe4, #dce6f0);
		color: #44546a;
		line-height: 13px;
	}
	.panel-title button,
	.side button {
		color: #000;
		font: bold 13px/14px 'Liberation Sans', sans-serif;
	}
	.panel-body {
		display: flex;
		height: 266px;
		background: #fff;
	}
	.clip {
		flex: 1;
		min-width: 0;
		overflow: hidden;
	}
	table {
		width: 100%;
		border-collapse: separate;
		border-spacing: 0;
		table-layout: fixed;
	}
	th {
		font-weight: normal;
	}
	.symbol {
		width: 104px;
	}
	.bid-col {
		width: 69px;
	}
	.quotes th {
		box-sizing: border-box;
		height: 25px;
		padding: 0 5px;
		border-right: 1px solid #e4e8ec;
		border-bottom: 1px solid #d0d4d8;
		background: linear-gradient(#fff 50%, #f3f5f8);
		text-align: right;
	}
	.quotes th:first-child {
		text-align: left;
	}
	.quotes td {
		box-sizing: border-box;
		height: 21px;
		padding: 0 2px;
		border-right: 1px solid #b4c0b4;
		border-bottom: 1px solid #b4c0b4;
		background: #eefdee;
		text-align: right;
		line-height: 20px;
	}
	.quotes td:first-child {
		color: #a2a8a2;
		text-align: left;
	}
	.quotes td:last-child {
		padding-right: 4px;
	}
	.quotes td:first-child svg {
		display: inline-block;
		margin: 0 5px 0 1px;
		vertical-align: -2px;
	}
	.up td {
		color: #1426c0;
	}
	.down td {
		color: #cc2414;
	}
	.scrollbar {
		flex: none;
		display: flex;
		flex-direction: column;
		align-items: center;
		width: 16px;
		background: #f2f2f2;
	}
	.scrollbar i {
		margin: 6px 0;
		border: 3px solid transparent;
	}
	.scrollbar .up {
		border-bottom: 4px solid #444;
		border-top: 0;
	}
	.scrollbar .dn {
		margin-top: auto;
		border-top: 4px solid #444;
		border-bottom: 0;
	}
	.thumb {
		box-sizing: border-box;
		width: 14px;
		height: 25px;
		margin-top: 2px;
		border: 1px solid #9a9a9a;
		border-radius: 2px;
		background:
			linear-gradient(#777, #777) center / 7px 1px no-repeat,
			linear-gradient(#777, #777) center calc(50% - 3px) / 7px 1px no-repeat,
			linear-gradient(#777, #777) center calc(50% + 3px) / 7px 1px no-repeat,
			linear-gradient(90deg, #f6f6f6, #cfcfcf);
	}
	.thumb.tall {
		height: 101px;
		margin-top: 11px;
	}
	.thumb.end {
		height: 15px;
		margin-top: auto;
		background: linear-gradient(90deg, #f6f6f6, #cfcfcf);
	}
	.thumb.end + .dn {
		margin-top: 8px;
	}
	.tree {
		padding-top: 1px;
		list-style: none;
	}
	.tree li {
		display: flex;
		align-items: center;
		gap: 6px;
		height: 20px;
		background: repeating-linear-gradient(#888 0 1px, transparent 1px 2px) 14px 0 / 1px 20px no-repeat;
	}
	.tree .root {
		padding-left: 10px;
	}
	.tree .server {
		gap: 9px;
		padding-left: 31px;
	}
	.tree .account {
		padding-left: 56px;
		background:
			repeating-linear-gradient(#888 0 1px, transparent 1px 2px) 14px 0 / 1px 20px no-repeat,
			repeating-linear-gradient(#888 0 1px, transparent 1px 2px) 35px 0 / 1px 20px no-repeat,
			repeating-linear-gradient(#888 0 1px, transparent 1px 2px) 56px 0 / 1px 20px no-repeat;
	}
	.node {
		flex: none;
		box-sizing: border-box;
		width: 9px;
		height: 9px;
		border: 1px solid #8a9098;
		background: linear-gradient(#3c5c90, #3c5c90) center / 5px 1px no-repeat #fff;
	}
	.dots {
		flex: none;
		width: 8px;
		border-top: 1px dotted #888;
	}

	/* Tab strips */
	.tabs {
		display: flex;
		align-items: flex-start;
		height: 22px;
		padding-left: 2px;
		border-top: 1px solid #000;
		color: #707070;
	}
	.tabs button {
		position: relative;
		box-sizing: border-box;
		height: 21px;
		padding: 0 10px;
		line-height: 20px;
	}
	.tabs button:not(.active)::after {
		content: '';
		position: absolute;
		right: 0;
		top: 4px;
		height: 14px;
		border-right: 1px solid #777;
	}
	.tabs .active {
		margin-top: -1px;
		border: 1px solid #000;
		border-top-color: #fff;
		background: #fff;
		color: #000;
	}
	.tabs button:has(+ .active)::after {
		display: none;
	}

	/* Chart */
	.chart-pane {
		flex: 1;
		min-width: 0;
		display: flex;
		flex-direction: column;
	}
	.chart {
		display: grid;
		grid-template: 267px 1fr / minmax(0, 1fr) 42px;
		flex: none;
		height: 289px;
		box-sizing: border-box;
		padding: 2px 0 0 2px;
		border-left: 1px solid #777;
		background: #141414;
		color: #fffff4;
		font: 9px/14px var(--small);
	}
	.plot {
		position: relative;
		border: 1px solid #fff;
		border-left-color: #ddd;
		overflow: hidden;
	}
	.grid {
		stroke: #404040;
		stroke-dasharray: 4 3;
	}
	.bid {
		stroke: #4c4c4c;
	}
	.ohlc {
		position: absolute;
		left: 4px;
		top: 1px;
	}
	.price-axis {
		position: relative;
		padding: 15px 0 0 5px;
	}
	.price-axis span {
		display: block;
		line-height: 33px;
		background: linear-gradient(#fff, #fff) 0 center / 3px 1px no-repeat;
		margin-left: -5px;
		padding-left: 5px;
	}
	.price-axis b {
		position: absolute;
		left: 0;
		right: 0;
		top: 104px;
		padding-left: 5px;
		background: #fffff0;
		color: #000;
		font-weight: normal;
		line-height: 12px;
	}
	.date-axis {
		display: flex;
		grid-column: 1 / -1;
		overflow: hidden;
	}
	.date-axis span {
		flex: none;
		width: 64px;
		height: 16px;
		padding-top: 1px;
		background: linear-gradient(#fff, #fff) 0 0 / 1px 3px no-repeat;
	}
	.chart-tabs {
		box-sizing: border-box;
		height: 20px;
		margin-top: 1px;
		padding-left: 3px;
	}
	.chart-tabs button {
		height: 19px;
		padding: 0 13px;
		line-height: 18px;
	}
	.chart-tabs .active {
		padding: 0 11px;
	}
	.tab-scroll {
		display: flex;
		gap: 14px;
		margin: 5px 8px 0 auto;
	}
	.tab-scroll i {
		border: 4px solid transparent;
		border-right-color: #888;
		border-left: 0;
	}
	.tab-scroll i + i {
		border-left: 4px solid #000;
		border-right: 0;
	}

	/* Terminal */
	.terminal {
		flex: 1;
		display: flex;
		margin-top: 4px;
	}
	.side {
		display: flex;
		flex-direction: column;
		justify-content: space-between;
		width: 15px;
		margin-bottom: 2px;
		padding-bottom: 6px;
		background: linear-gradient(#f0f0f0 14px, #b8cfea 14px, #8faed6);
	}
	.side span {
		writing-mode: vertical-rl;
		transform: rotate(180deg);
		line-height: 15px;
	}
	.terminal-main {
		flex: 1;
		min-width: 0;
		display: flex;
		flex-direction: column;
		border-left: 1px solid #888;
		border-top: 1px solid #999;
	}
	.history-wrap {
		flex: 1;
		display: flex;
		align-items: stretch;
		background: #fff;
	}
	.history-wrap .scrollbar {
		width: 18px;
	}
	.history {
		flex: 1;
		align-self: flex-start;
	}
	.history th {
		box-sizing: border-box;
		height: 25px;
		padding: 0 5px;
		border-right: 1px solid #e2e6ea;
		border-bottom: 1px solid #ccd2d6;
		background: linear-gradient(#fff 45%, #f2f4f7);
		text-align: right;
	}
	.history th em {
		margin: 0 4px 0 12px;
		color: #888;
		font-size: 10px;
	}
	.history td {
		box-sizing: border-box;
		height: 21px;
		padding: 0 3px 0 2px;
		border-right: 1px solid #c4c8cc;
		border-bottom: 1px solid #c4c8cc;
		text-align: right;
		line-height: 18px;
	}
	.history th:last-child,
	.history td:last-child {
		border-right: 0;
	}
	.history td:last-child {
		padding-right: 4px;
	}
	.history th:first-child,
	.history td:first-child {
		text-align: left;
	}
	.history td:first-child svg {
		display: inline-block;
		margin-right: 4px;
		vertical-align: -5px;
	}
	.history tbody tr:nth-child(odd) {
		background: #ebebeb;
	}
	.history tfoot td {
		height: 20px;
		border: 0;
		background: #c8c8c8;
		font-weight: bold;
	}
	.history tfoot i {
		display: inline-block;
		width: 16px;
		margin-left: 4px;
		color: #888;
		font: 10px/16px 'DejaVu Sans', sans-serif;
	}
	.terminal-tabs {
		padding-left: 1px;
		height: 26px;
	}
	.terminal-tabs button {
		padding: 0 10px;
		height: 23px;
		line-height: 22px;
	}
	.terminal-tabs sub {
		margin-left: 2px;
		color: #d03030;
		font-size: 10px;
		line-height: 1;
	}

	/* Status bar */
	.statusbar {
		display: flex;
		align-items: center;
		height: 23px;
		border-top: 1px solid #a0a0a0;
		line-height: 22px;
	}
	.help {
		position: relative;
		flex: 1;
		padding-left: 2px;
	}
	.help small {
		position: absolute;
		left: 2px;
		top: 4px;
		font-size: 10px;
		font-weight: 600;
		color: #000;
	}
	.cell {
		box-sizing: border-box;
		height: 18px;
		padding-left: 5px;
		border-left: 1px solid #b0b0b0;
		line-height: 20px;
	}
	.traffic {
		display: flex;
		align-items: center;
		gap: 4px;
		width: 146px;
	}
	.resize {
		align-self: flex-end;
	}

	/* Floating network meter */
	.meter {
		position: absolute;
		right: 415px;
		top: 39px;
		display: flex;
		flex-direction: row-reverse;
		align-items: center;
		color: #fff;
	}
	.ball {
		position: relative;
		display: grid;
		place-items: center;
		width: 60px;
		height: 60px;
		border-radius: 50%;
		background: linear-gradient(#4a4c5c, #656a7c 60%, #4c5064);
		box-shadow: 0 0 3px #444;
	}
	.ball svg {
		position: absolute;
	}
	.ball span {
		font: 300 24px/30px 'Open Sans', sans-serif;
	}
	.ball small {
		font-size: 10px;
	}
	.speeds {
		width: 60px;
		margin-left: -20px;
		padding: 0 8px 0 12px;
		border-radius: 0 21px 21px 0;
		background: #343544;
		box-shadow: 0 0 4px #8888;
	}
	.speeds p {
		display: flex;
		justify-content: space-between;
		padding-left: 14px;
		line-height: 21px;
	}
	.speeds small {
		color: #b0b0b8;
		font-size: 10px;
	}
	.speeds i {
		font: 9px/21px 'DejaVu Sans', sans-serif;
	}
	.upload {
		color: #4ab4e8;
	}
	.download {
		color: #3cb04c;
	}
</style>
